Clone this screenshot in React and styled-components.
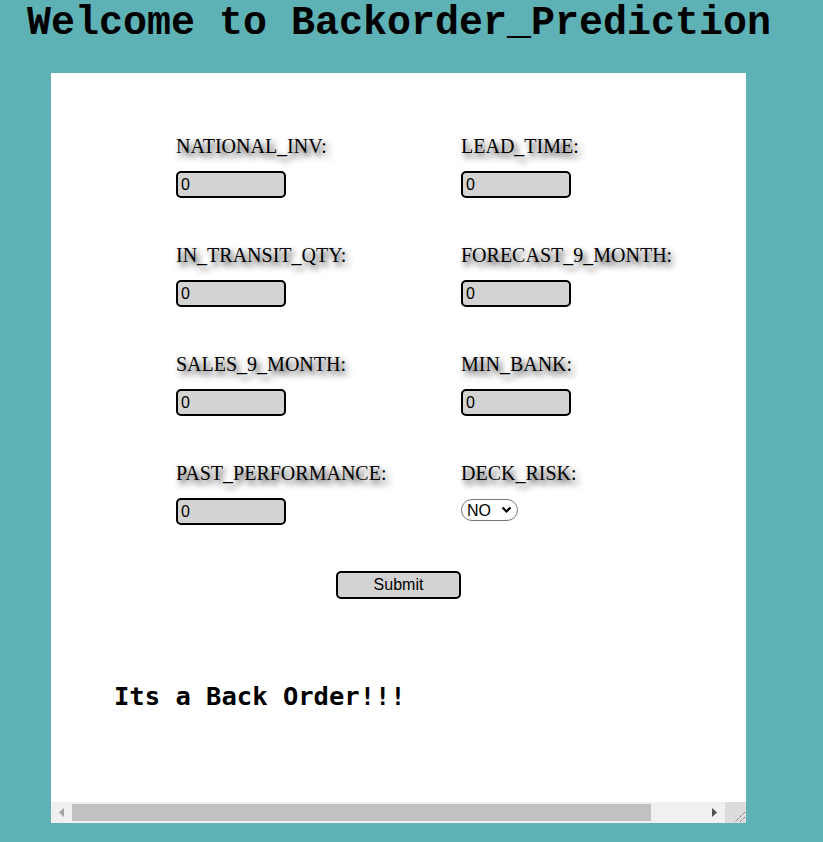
import React from "react";
import styled, { createGlobalStyle } from "styled-components";

const Global = createGlobalStyle`
  html, body { margin: 0; padding: 0; background: #5eb1b4; }
  body { width: 823px; height: 842px; overflow: hidden; }
`;

const Page = styled.div`
  display: flex;
  flex-direction: column;
`;

const Title = styled.h1`
  margin: 0;
  padding: 2px 0 0 27px;
  font-family: "Liberation Mono", "Courier New", monospace;
  font-weight: bold;
  font-size: 40px;
  line-height: 43px;
  color: #000;
`;

const Frame = styled.div`
  margin: 28px 0 0 51px;
  width: 695px;
  height: 750px;
  background: #fff;
  display: flex;
  flex-direction: column;
`;

const Content = styled.div`
  flex: 1;
  display: flex;
  flex-direction: column;
  padding: 62px 0 0 125px;
`;

const Grid = styled.div`
  display: grid;
  grid-template-columns: 285px 285px;
  row-gap: 46px;
`;

const Field = styled.div`
  display: flex;
  flex-direction: column;
  align-items: flex-start;
  gap: 14px;
`;

const Label = styled.label`
  font-family: "Liberation Serif", "Times New Roman", serif;
  font-size: 20px;
  line-height: 22px;
  color: #000;
  text-shadow: 3px 4px 6px rgba(0, 0, 0, 0.9);
  white-space: nowrap;
`;

const Input = styled.input`
  box-sizing: border-box;
  width: 110px;
  height: 27px;
  margin: 0;
  padding: 0 3px;
  background: #d3d3d3;
  border: 2px solid #000;
  border-radius: 5px;
  font-family: "Liberation Sans", Arial, sans-serif;
  font-size: 16px;
  color: #000;
  outline: none;
`;

const SelectWrap = styled.div`
  position: relative;
  display: inline-flex;
  margin-top: 1px;
`;

const Select = styled.select`
  appearance: none;
  -webkit-appearance: none;
  box-sizing: border-box;
  width: 57px;
  height: 22px;
  padding: 0 0 0 5px;
  border: 1px solid #767676;
  border-radius: 11px;
  background: #fff;
  font-family: "Liberation Sans", Arial, sans-serif;
  font-size: 16px;
  color: #000;
  outline: none;
`;

const Chevron = styled.svg`
  position: absolute;
  right: 6px;
  top: 7px;
  pointer-events: none;
`;

const SubmitRow = styled.div`
  display: flex;
  justify-content: center;
  margin: 46px 0 0 -125px;
`;

const Button = styled.button`
  box-sizing: border-box;
  width: 125px;
  height: 28px;
  background: #d3d3d3;
  border: 2px solid #000;
  border-radius: 5px;
  font-family: "Liberation Sans", Arial, sans-serif;
  font-size: 16px;
  color: #000;
  padding: 0;
`;

const Result = styled.h2`
  margin: 82px 0 0 -62px;
  font-family: "DejaVu Sans Mono", "Liberation Mono", monospace;
  font-weight: bold;
  font-size: 25.5px;
  line-height: 30px;
  color: #000;
`;

const Scrollbar = styled.div`
  height: 21px;
  display: flex;
  background: #f0f0f0;
`;

const ArrowBtn = styled.div`
  width: 21px;
  display: flex;
  align-items: center;
  justify-content: center;
`;

const Track = styled.div`
  flex: 1;
  display: flex;
  align-items: center;
`;

const Thumb = styled.div`
  width: 579px;
  height: 17px;
  background: #c1c1c1;
`;

const Corner = styled.div`
  width: 21px;
  background: #dcdcdc;
  display: flex;
  align-items: flex-end;
  justify-content: flex-end;
`;

const fields = [
  ["NATIONAL_INV:", "LEAD_TIME:"],
  ["IN_TRANSIT_QTY:", "FORECAST_9_MONTH:"],
  ["SALES_9_MONTH:", "MIN_BANK:"],
];

export default function App() {
  return (
    <Page>
      <Global />
      <Title>Welcome to Backorder_Prediction</Title>
      <Frame>
        <Content>
          <Grid>
            {fields.flat().map((f) => (
              <Field key={f}>
                <Label>{f}</Label>
                <Input defaultValue="0" />
              </Field>
            ))}
            <Field>
              <Label>PAST_PERFORMANCE:</Label>
              <Input defaultValue="0" />
            </Field>
            <Field>
              <Label>DECK_RISK:</Label>
              <SelectWrap>
                <Select defaultValue="NO">
                  <option>NO</option>
                  <option>YES</option>
                </Select>
                <Chevron width="11" height="8" viewBox="0 0 11 8">
                  <path d="M1.5 1.5 L5.5 5.5 L9.5 1.5" fill="none" stroke="#000" strokeWidth="2.2" />
                </Chevron>
              </SelectWrap>
            </Field>
          </Grid>
          <SubmitRow>
            <Button>Submit</Button>
          </SubmitRow>
          <Result>Its a Back Order!!!</Result>
        </Content>
        <Scrollbar>
          <ArrowBtn>
            <svg width="5" height="9" viewBox="0 0 5 9">
              <path d="M5 0 L0 4.5 L5 9 Z" fill="#a3a3a3" />
            </svg>
          </ArrowBtn>
          <Track>
            <Thumb />
          </Track>
          <ArrowBtn>
            <svg width="5" height="9" viewBox="0 0 5 9">
              <path d="M0 0 L5 4.5 L0 9 Z" fill="#505050" />
            </svg>
          </ArrowBtn>
          <Corner>
            <svg width="14" height="14" viewBox="0 0 14 14">
              <path d="M13 3 L3 13 M13 8 L8 13" stroke="#555" strokeWidth="1" strokeDasharray="1 1" />
            </svg>
          </Corner>
        </Scrollbar>
      </Frame>
    </Page>
  );
}
